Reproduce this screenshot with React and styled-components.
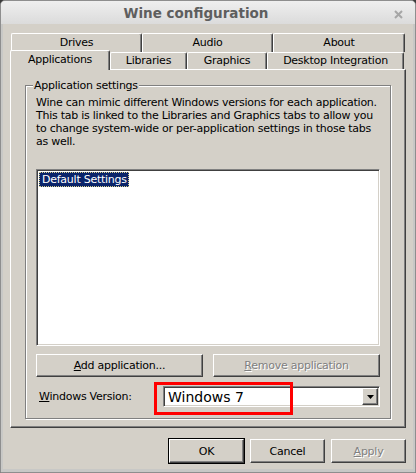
import React from "react"
import styled, { createGlobalStyle } from "styled-components"

const GlobalStyle = createGlobalStyle`
  html, body {
    margin: 0;
    padding: 0;
    background: #3b3b3b;
  }
  body {
    font-family: "DejaVu Sans", "Liberation Sans", sans-serif;
    font-size: 11px;
    letter-spacing: -0.25px;
    color: #000;
  }
`

const face = "#d4d0c8"

const Window = styled.div`
  width: 416px;
  height: 473px;
  box-sizing: border-box;
  display: flex;
  flex-direction: column;
  background: #c8c8c6;
  border: 1px solid #8e8e8e;
  border-radius: 5px 5px 0 0;
  overflow: hidden;
`

const TitleBar = styled.div`
  height: 23px;
  display: flex;
  align-items: center;
  background: linear-gradient(#efefef, #dbdbdb);
`

const Title = styled.div`
  width: 390px;
  text-align: center;
  font-weight: bold;
  font-size: 13.5px;
  letter-spacing: 0;
  color: #5e5e5e;
`

const CloseBox = styled.div`
  flex: 1;
  display: flex;
  align-items: center;
  padding: 3px 0 0 3px;
`

const Client = styled.div`
  flex: 1;
  margin: 0 2px 3px 2px;
  padding: 9px 7px 0 7px;
  background: ${face};
  display: flex;
  flex-direction: column;
`

const TabRow = styled.div`
  display: flex;
  height: ${(p) => p.$h}px;
  padding: ${(p) => p.$pad};
  align-items: stretch;
`

const Tab = styled.div`
  box-sizing: border-box;
  width: ${(p) => p.$w}px;
  display: flex;
  align-items: center;
  justify-content: center;
  background: ${face};
  border-top: 1px solid #fff;
  border-left: 1px solid #fff;
  border-right: 1px solid #404040;
  box-shadow: inset -1px 0 0 #808080;
  border-radius: 2px 2px 0 0;
  padding-bottom: 1px;
  ${(p) =>
    p.$active &&
    `
    align-self: flex-end;
    height: 20px;
    position: relative;
    top: 1px;
    z-index: 2;
    padding-bottom: 3px;
  `}
`

const Panel = styled.div`
  box-sizing: border-box;
  height: 359px;
  border-top: 1px solid #fff;
  border-left: 1px solid #fff;
  border-right: 1px solid #404040;
  border-bottom: 1px solid #404040;
  box-shadow: inset -1px -1px 0 #808080;
  padding: 15px 14px 0 14px;
`

const GroupBox = styled.div`
  position: relative;
  border: 1px solid #808080;
  box-shadow: inset 1px 1px 0 #fff, 1px 1px 0 #fff;
  padding: 10px 10px 11px 10px;
  display: flex;
  flex-direction: column;
`

const GroupTitle = styled.span`
  position: absolute;
  top: -7px;
  left: 7px;
  padding: 0 1px;
  line-height: 13px;
  background: ${face};
`

const Blurb = styled.p`
  margin: 0;
  line-height: 13px;
`

const ListBox = styled.div`
  box-sizing: border-box;
  margin-top: 21px;
  height: 177px;
  background: #fff;
  border: 1px solid;
  border-color: #808080 #fff #fff #808080;
  box-shadow: inset 1px 1px 0 #404040, inset -1px -1px 0 ${face};
  padding: 1px 0 0 1px;
`

const ListItem = styled.div`
  display: inline-block;
  height: 15px;
  line-height: 13px;
  box-sizing: border-box;
  padding: 0 1px 0 2px;
  background: #0a246a;
  color: #fff;
  border: 1px dotted #d8cf8a;
  margin: 1px 0 0 1px;
`

const ButtonRow = styled.div`
  display: flex;
  gap: ${(p) => p.$gap}px;
  margin-top: ${(p) => p.$top}px;
  justify-content: ${(p) => p.$justify || "flex-start"};
`

const Button = styled.div`
  box-sizing: border-box;
  width: ${(p) => p.$w}px;
  height: ${(p) => p.$h}px;
  display: flex;
  align-items: center;
  justify-content: center;
  background: ${face};
  border: 1px solid;
  border-color: #fff #404040 #404040 #fff;
  box-shadow: inset -1px -1px 0 #808080;
  color: ${(p) => (p.$disabled ? "#808080" : "#000")};
  text-shadow: ${(p) => (p.$disabled ? "1px 1px 0 #fff" : "none")};
  ${(p) =>
    p.$default &&
    `
    outline: 1px solid #000;
    outline-offset: 0;
  `}
`

const VersionRow = styled.div`
  display: flex;
  align-items: center;
  margin-top: 9px;
`

const Label = styled.span`
  width: 124px;
  margin-left: 3px;
`

const Combo = styled.div`
  position: relative;
  box-sizing: border-box;
  width: 217px;
  height: 21px;
  background: #fff;
  border: 1px solid;
  border-color: #808080 #fff #fff #808080;
  box-shadow: inset 1px 1px 0 #404040, inset -1px -1px 0 ${face};
  padding: 1px 1px 1px 4px;
  display: flex;
  align-items: center;
`

const ComboText = styled.span`
  flex: 1;
  font-size: 14px;
  letter-spacing: 0;
`

const DropButton = styled.div`
  box-sizing: border-box;
  width: 16px;
  height: 17px;
  background: ${face};
  border: 1px solid;
  border-color: #fff #404040 #404040 #fff;
  box-shadow: inset -1px -1px 0 #808080;
  display: flex;
  align-items: center;
  justify-content: center;
`

const Highlight = styled.div`
  position: absolute;
  top: -5px;
  left: -10px;
  width: 139px;
  height: 33px;
  box-sizing: border-box;
  border: 3px solid #ff0000;
  pointer-events: none;
`

const CloseIcon = () => (
  <svg width="9" height="9" viewBox="0 0 9 9">
    <path d="M1 1L8 8M8 1L1 8" stroke="#a6a6a6" strokeWidth="2" />
  </svg>
)

const Arrow = () => (
  <svg width="7" height="4" viewBox="0 0 7 4">
    <path d="M0 0H7L3.5 4Z" fill="#000" />
  </svg>
)

export default () => (
  <>
    <GlobalStyle />
    <Window>
      <TitleBar>
        <Title>Wine configuration</Title>
        <CloseBox>
          <CloseIcon />
        </CloseBox>
      </TitleBar>

      <Client>
        <TabRow $h={19} $pad="0 1px 0 1px">
          <Tab $w={131}>Drives</Tab>
          <Tab $w={131}>Audio</Tab>
          <Tab $w={132}>About</Tab>
        </TabRow>
        <TabRow $h={17} $pad="0 2px 0 0">
          <Tab $w={100} $active>
            Applications
          </Tab>
          <Tab $w={77}>Libraries</Tab>
          <Tab $w={80}>Graphics</Tab>
          <Tab $w={137}>Desktop Integration</Tab>
        </TabRow>

        <Panel>
          <GroupBox>
            <GroupTitle>Application settings</GroupTitle>
            <Blurb>
              Wine can mimic different Windows versions for each application.
              <br />
              This tab is linked to the Libraries and Graphics tabs to allow you
              <br />
              to change system-wide or per-application settings in those tabs
              <br />
              as well.
            </Blurb>

            <ListBox>
              <ListItem>Default Settings</ListItem>
            </ListBox>

            <ButtonRow $gap={10} $top={8}>
              <Button $w={168} $h={23}>
                <span>
                  <u>A</u>dd application...
                </span>
              </Button>
              <Button $w={168} $h={23} $disabled>
                <span>
                  <u>R</u>emove application
                </span>
              </Button>
            </ButtonRow>

            <VersionRow>
              <Label>
                <u>W</u>indows Version:
              </Label>
              <Combo>
                <ComboText>Windows 7</ComboText>
                <DropButton>
                  <Arrow />
                </DropButton>
                <Highlight />
              </Combo>
            </VersionRow>
          </GroupBox>
        </Panel>

        <ButtonRow $gap={6} $top={11} $justify="flex-end">
          <Button $w={75} $h={24} $default>
            OK
          </Button>
          <Button $w={75} $h={24}>
            Cancel
          </Button>
          <Button $w={75} $h={24} $disabled>
            <span>
              <u>A</u>pply
            </span>
          </Button>
        </ButtonRow>
      </Client>
    </Window>
  </>
)
